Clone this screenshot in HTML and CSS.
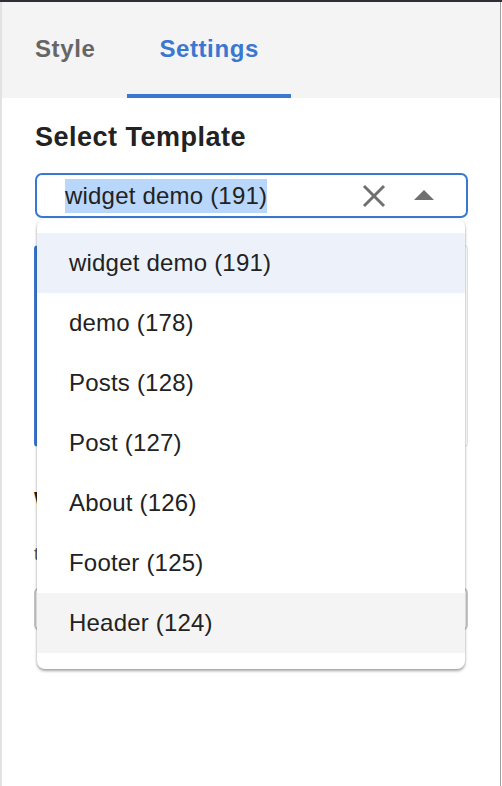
FILE: index.html
```html
<!DOCTYPE html>
<html lang="en">
<head>
<meta charset="utf-8">
<title>Settings</title>
<link rel="stylesheet" href="styles.css">
</head>
<body>
<div class="topbar"></div>
<div class="panel">
  <nav class="tabs">
    <div class="tab">Style</div>
    <div class="tab active">Settings</div>
  </nav>
  <section class="content">
    <h2 class="heading">Select Template</h2>
    <div class="combo">
      <div class="select">
        <span class="value"><span class="sel">widget demo (191)</span></span>
        <span class="clear">
          <svg width="24" height="24" viewBox="0 0 24 24"><path d="M2 2L22 22M22 2L2 22" stroke="#707070" stroke-width="3" fill="none"/></svg>
        </span>
        <span class="caret">
          <svg width="20" height="10" viewBox="0 0 20 10"><path d="M0 10L10 0L20 10Z" fill="#707070"/></svg>
        </span>
      </div>
      <ul class="menu">
        <li class="item focused">widget demo (191)</li>
        <li class="item">demo (178)</li>
        <li class="item">Posts (128)</li>
        <li class="item">Post (127)</li>
        <li class="item">About (126)</li>
        <li class="item">Footer (125)</li>
        <li class="item hover">Header (124)</li>
      </ul>
    </div>
    <div class="card"></div>
    <h3 class="subhead">W</h3>
    <p class="note">t</p>
    <div class="field"></div>
  </section>
</div>
</body>
</html>
```

FILE: styles.css
```css
html, body {
  margin: 0;
  padding: 0;
  background: #ffffff;
}
body {
  font-family: "Liberation Sans", Arial, sans-serif;
  width: 502px;
  height: 786px;
  overflow: hidden;
}
.topbar {
  height: 2px;
  background: #2d3135;
}
.panel {
  box-sizing: border-box;
  width: 501px;
  height: 784px;
  border-left: 2px solid #e2e2e2;
  border-right: 1px solid #a0a0a0;
}
.tabs {
  display: flex;
  height: 96px;
  background: #f4f4f4;
  padding-left: 1px;
}
.tab {
  box-sizing: border-box;
  padding: 0 32px;
  height: 96px;
  line-height: 94px;
  font-size: 24px;
  font-weight: bold;
  color: #666666;
  letter-spacing: 0.6px;
  border-bottom: 4px solid transparent;
}
.tab.active {
  color: #3a77d1;
  border-bottom-color: #3a77d1;
}
.content {
  padding: 24px 32px 0 33px;
}
.heading {
  margin: 0;
  font-size: 27px;
  line-height: 30px;
  font-weight: bold;
  color: #222222;
  letter-spacing: 0.5px;
}
.combo {
  position: relative;
  margin-top: 21px;
}
.select {
  box-sizing: border-box;
  height: 45px;
  border: 2px solid #3a77d1;
  border-radius: 7px;
  display: flex;
  align-items: center;
  padding-left: 28px;
  padding-right: 32px;
}
.value {
  flex: 1;
  font-size: 24px;
  letter-spacing: 0.2px;
  color: #222222;
}
.sel {
  display: inline-block;
  background: #b9d6fb;
  line-height: 34px;
}
.clear {
  display: flex;
  width: 24px;
  height: 24px;
  margin-right: 28px;
}
.caret {
  display: flex;
  width: 20px;
  height: 10px;
  margin-bottom: 2px;
}
.menu {
  position: absolute;
  z-index: 2;
  top: 46px;
  left: 2px;
  width: 428px;
  margin: 0;
  padding: 14px 0 16px;
  list-style: none;
  background: #ffffff;
  border-radius: 8px;
  box-shadow: 0 2px 3px rgba(0, 0, 0, 0.35), 0 0 3px rgba(0, 0, 0, 0.08);
}
.item {
  height: 60px;
  line-height: 60px;
  padding-left: 32px;
  font-size: 24px;
  letter-spacing: 0.2px;
  color: #222222;
}
.item.focused {
  background: #edf2fa;
}
.item.hover {
  background: #f4f4f4;
}
.card {
  box-sizing: border-box;
  margin-top: 27px;
  margin-left: -1px;
  height: 202px;
  width: 434px;
  border: 1px solid #e4e4e4;
  border-left: 3px solid #3a77d1;
  border-radius: 4px;
}
.subhead {
  margin: 40px 0 0 -1px;
  font-size: 22px;
  line-height: 26px;
  color: #222222;
}
.note {
  margin: 30px 0 0 -1px;
  font-size: 18px;
  line-height: 22px;
  color: #555555;
}
.field {
  box-sizing: border-box;
  margin-top: 22px;
  margin-left: -1px;
  width: 434px;
  height: 44px;
  border: 2px solid #c4c4c4;
  border-radius: 6px;
}
```
